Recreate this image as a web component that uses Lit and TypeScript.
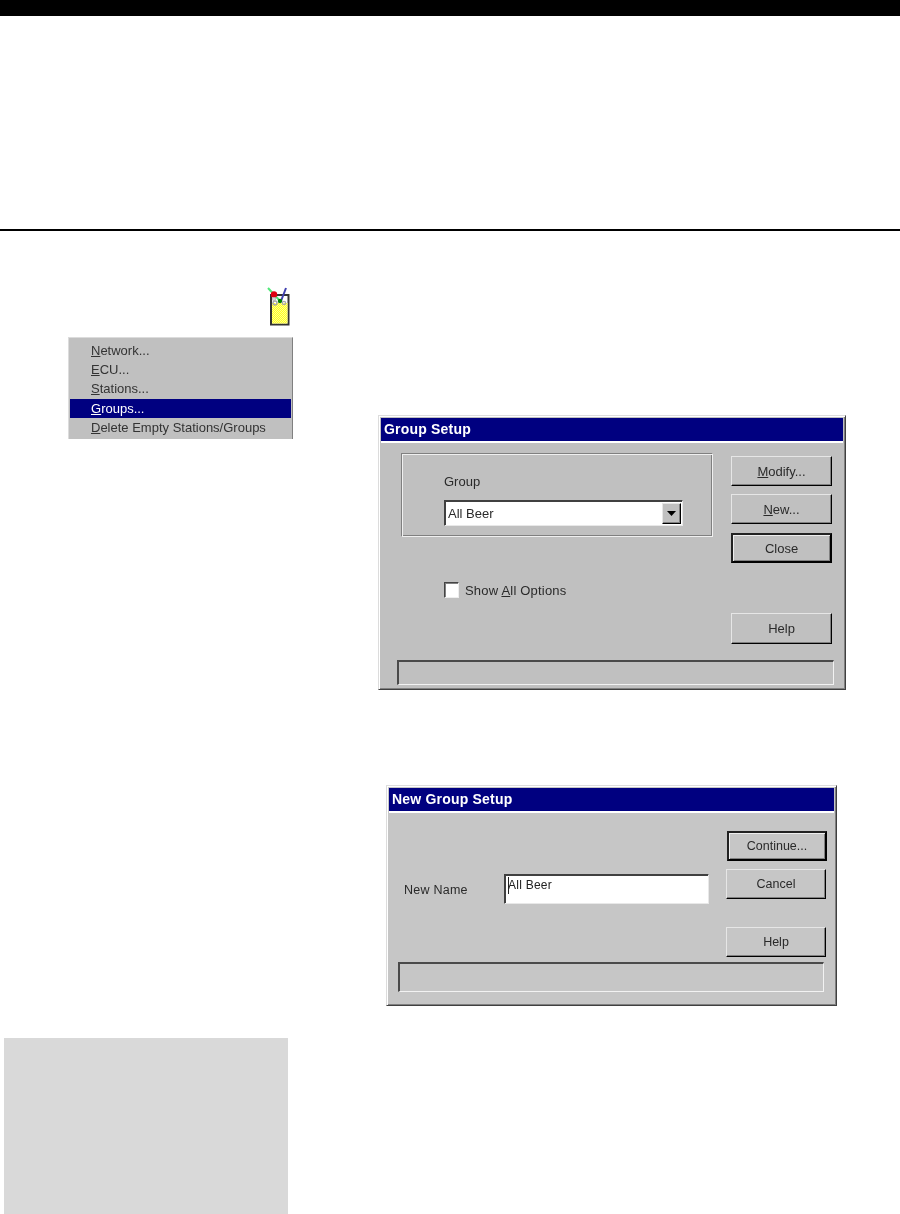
import { LitElement, html, css } from "lit";
import { customElement } from "lit/decorators.js";

@customElement("app-root")
export class AppRoot extends LitElement {
  static styles = css`
    :host { display: block; width: 900px; height: 1214px; background: #fff; overflow: hidden;
      font-family: "Liberation Sans", Arial, sans-serif; color: #222; }
    .top { height: 16px; background: #000; }
    .rule { height: 2px; margin-top: 213px; background: #000; }
    .content { display: flex; align-items: flex-start; }
    .left { width: 378px; flex: none; display: flex; flex-direction: column; }
    .right { flex: 1; padding-top: 184px; }
    .icon { display: block; margin: 55px 0 0 266px; width: 27px; height: 42px; filter: blur(.3px); }
    .menu { box-sizing: border-box; margin: 9px 0 0 68px; width: 225px; height: 102px; background: #c0c0c0;
      border-top: 1px solid #dcdcdc; border-left: 1px solid #dcdcdc; border-right: 1px solid #808080;
      padding: 3px 1px 0; font-size: 13px; color: #333; }
    .mi { height: 19.2px; line-height: 19.2px; padding-left: 21px; white-space: nowrap; }
    .mi.sel { background: #000080; color: #fff; }
    .note { margin: 599px 0 0 4px; width: 284px; height: 176px; background: #d9d9d9; }

    .dlg { box-sizing: border-box; background: var(--g); border: 1px solid; border-color: #dcdcdc #404040 #404040 #dcdcdc;
      box-shadow: inset 1px 1px 0 #fff, inset -1px -1px 0 #808080; padding: 2px; }
    .d1 { --g: #c0c0c0; width: 468px; height: 275px; }
    .d2 { --g: #c6c6c6; width: 451px; height: 221px; margin: 95px 0 0 8px; }
    .title { height: 23px; line-height: 23px; background: #000080; color: #fff; font-weight: bold; font-size: 14px;
      letter-spacing: .2px; padding-left: 3px; border-bottom: 2px solid #fff; }
    .soft { filter: blur(.35px); }
    .txt { font-size: 13px; color: #2a2a2a; white-space: nowrap; }
    .d2 .txt { font-size: 12.5px; }

    .btn { box-sizing: border-box; display: flex; align-items: center; justify-content: center; background: var(--g);
      border: 1px solid; border-color: #e6e6e6 #000 #000 #e6e6e6; box-shadow: inset -1px -1px 0 #808080; }
    .btn.def { border: 2px solid #000; border-color: #222 #000 #000 #222; box-shadow: inset 1px 1px 0 #eee, inset -1px -1px 0 #808080; }
    .status { box-sizing: border-box; border: 2px solid; border-color: #4a4a4a #f2f2f2 #f2f2f2 #4a4a4a;
      border-right-width: 1px; border-bottom-width: 1px; }

    /* Group Setup */
    .b1 { display: flex; height: 209px; }
    .b1l { width: 350px; padding: 10px 0 0 20px; flex: none; box-sizing: border-box; }
    .box { box-sizing: border-box; width: 312px; height: 84px; border: 1px solid; border-color: #808080 #f0f0f0 #f0f0f0 #808080;
      box-shadow: inset 1px 1px 0 #f0f0f0, inset -1px -1px 0 #808080; padding: 20px 0 0 42px; }
    .lab { height: 15px; line-height: 15px; }
    .combo { box-sizing: border-box; margin-top: 11px; width: 239px; height: 26px; background: #fff; display: flex;
      justify-content: space-between; align-items: center; border: 1px solid; border-color: #404040 #e8e8e8 #e8e8e8 #404040;
      box-shadow: inset 1px 1px 0 #404040; padding: 0 1px 0 3px; }
    .arrow { box-sizing: border-box; width: 19px; height: 21px; background: #c0c0c0; display: flex; align-items: center; justify-content: center;
      border: 1px solid; border-color: #e6e6e6 #000 #000 #e6e6e6; box-shadow: inset -1px -1px 0 #808080; }
    .check { display: flex; align-items: center; gap: 6px; margin: 45px 0 0 43px; height: 16px; }
    .check .txt { letter-spacing: .2px; }
    .cb { box-sizing: border-box; width: 15px; height: 16px; background: #fff; border: 1px solid; border-color: #444 #eee #eee #444; box-shadow: inset 1px 1px 0 #808080; }
    .b1r { padding-top: 13px; display: flex; flex-direction: column; width: 101px; }
    .b1r .btn { width: 101px; height: 30px; }
    .b1r .btn + .btn { margin-top: 8px; }
    .b1r .btn.def { margin-top: 9px; }
    .b1r .btn.help { margin-top: 50px; height: 31px; }
    .d1 .status { margin: 8px 0 0 16px; width: 437px; height: 25px; }

    /* New Group Setup */
    .b2 { display: flex; height: 149px; }
    .b2l { flex: none; width: 337px; padding: 61px 0 0 15px; box-sizing: border-box; display: flex; }
    .d2 .nm { width: 100px; height: 30px; line-height: 32px; flex: none; letter-spacing: .25px; }
    .inp { box-sizing: border-box; width: 205px; height: 30px; background: #fff; border: 1px solid; border-color: #404040 #e8e8e8 #e8e8e8 #404040;
      box-shadow: inset 1px 1px 0 #404040; padding: 1px 0 0 3px; line-height: 18px; letter-spacing: .25px; font-size: 12px; }
    .caret { display: inline-block; width: 1px; height: 17px; background: #222; margin-right: -1px; vertical-align: -5px; }
    .b2r { padding-top: 18px; display: flex; flex-direction: column; width: 100px; }
    .b2r .btn { width: 100px; height: 30px; }
    .b2r .btn.def { margin-left: 1px; }
    .b2r .btn.can { margin-top: 8px; }
    .b2r .btn.help { margin-top: 28px; }
    .d2 .status { margin: 0 0 0 9px; width: 426px; height: 30px; }
  `;

  private icon() {
    return html`<svg class="icon" viewBox="0 0 27 42" xmlns="http://www.w3.org/2000/svg">
      <defs>
        <pattern id="dith" width="2" height="2" patternUnits="userSpaceOnUse">
          <rect width="2" height="2" fill="#ffff20" />
          <rect width="1" height="1" fill="#ffff90" />
          <rect x="1" y="1" width="1" height="1" fill="#ffff90" />
        </pattern>
      </defs>
      <rect x="5" y="9" width="17.5" height="29.5" fill="#fff" stroke="#333" stroke-width="2" />
      <rect x="6" y="17" width="15.5" height="20.5" fill="url(#dith)" />
      <path d="M2 2 L14 15" stroke="#50e878" stroke-width="2" />
      <path d="M20 2 L15 15" stroke="#4040b0" stroke-width="2" />
      <circle cx="8" cy="8.5" r="3.2" fill="#e00010" />
      <circle cx="14" cy="15" r="2.2" fill="#008000" />
      <circle cx="9" cy="17" r="2" fill="none" stroke="#a8a8a8" stroke-width="1.4" />
      <circle cx="18" cy="17" r="1.6" fill="none" stroke="#a8a8a8" stroke-width="1.4" />
      <circle cx="8" cy="13" r="1.4" fill="none" stroke="#b8b8b8" stroke-width="1.2" />
    </svg>`;
  }

  render() {
    return html`
      <div class="top"></div>
      <div class="rule"></div>
      <div class="content">
        <div class="left">
          ${this.icon()}
          <div class="menu soft">
            <div class="mi"><u>N</u>etwork...</div>
            <div class="mi"><u>E</u>CU...</div>
            <div class="mi"><u>S</u>tations...</div>
            <div class="mi sel"><u>G</u>roups...</div>
            <div class="mi"><u>D</u>elete Empty Stations/Groups</div>
          </div>
          <div class="note"></div>
        </div>
        <div class="right">
          <div class="dlg d1">
            <div class="title soft">Group Setup</div>
            <div class="b1">
              <div class="b1l">
                <div class="box">
                  <div class="lab txt soft">Group</div>
                  <div class="combo">
                    <span class="txt soft">All Beer</span>
                    <span class="arrow"><svg width="9" height="5" viewBox="0 0 9 5"><path d="M0 0H9L4.5 5Z" fill="#000" /></svg></span>
                  </div>
                </div>
                <div class="check"><span class="cb"></span><span class="txt soft">Show <u>A</u>ll Options</span></div>
              </div>
              <div class="b1r">
                <div class="btn"><span class="txt soft"><u>M</u>odify...</span></div>
                <div class="btn"><span class="txt soft"><u>N</u>ew...</span></div>
                <div class="btn def"><span class="txt soft">Close</span></div>
                <div class="btn help"><span class="txt soft">Help</span></div>
              </div>
            </div>
            <div class="status"></div>
          </div>
          <div class="dlg d2">
            <div class="title soft">New Group Setup</div>
            <div class="b2">
              <div class="b2l">
                <div class="nm txt soft">New Name</div>
                <div class="inp soft"><span class="caret"></span>All Beer</div>
              </div>
              <div class="b2r">
                <div class="btn def"><span class="txt soft">Continue...</span></div>
                <div class="btn can"><span class="txt soft">Cancel</span></div>
                <div class="btn help"><span class="txt soft">Help</span></div>
              </div>
            </div>
            <div class="status"></div>
          </div>
        </div>
      </div>
    `;
  }
}
